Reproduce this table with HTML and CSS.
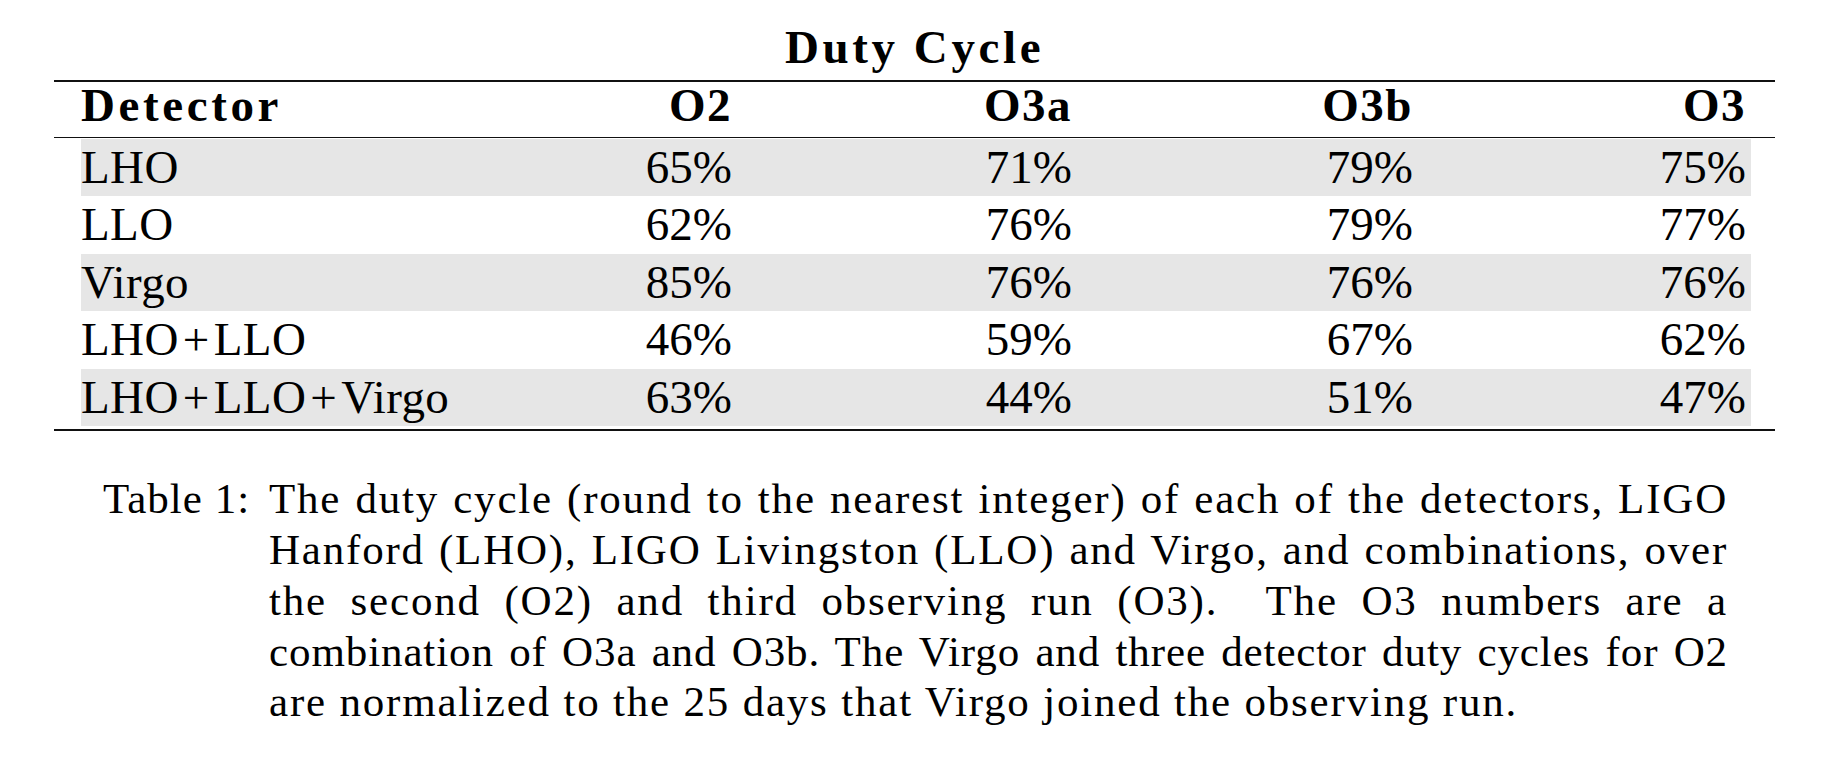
FILE: index.html
```html
<!DOCTYPE html>
<html>
<head>
<meta charset="utf-8">
<title>Duty Cycle</title>
<link rel="stylesheet" href="styles.css">
</head>
<body>
<div class="page">
  <div class="table-wrap">
    <div class="title">Duty Cycle</div>
    <div class="tbl">
      <div class="row head">
        <span class="name">Detector</span>
        <span class="num">O2</span>
        <span class="num">O3a</span>
        <span class="num">O3b</span>
        <span class="num">O3</span>
      </div>
      <div class="tbody">
        <div class="row shade">
          <span class="name">LHO</span>
          <span class="num">65%</span>
          <span class="num">71%</span>
          <span class="num">79%</span>
          <span class="num">75%</span>
        </div>
        <div class="row">
          <span class="name">LLO</span>
          <span class="num">62%</span>
          <span class="num">76%</span>
          <span class="num">79%</span>
          <span class="num">77%</span>
        </div>
        <div class="row shade">
          <span class="name">Virgo</span>
          <span class="num">85%</span>
          <span class="num">76%</span>
          <span class="num">76%</span>
          <span class="num">76%</span>
        </div>
        <div class="row">
          <span class="name">LHO<span class="plus">+</span>LLO</span>
          <span class="num">46%</span>
          <span class="num">59%</span>
          <span class="num">67%</span>
          <span class="num">62%</span>
        </div>
        <div class="row shade">
          <span class="name">LHO<span class="plus">+</span>LLO<span class="plus">+</span>Virgo</span>
          <span class="num">63%</span>
          <span class="num">44%</span>
          <span class="num">51%</span>
          <span class="num">47%</span>
        </div>
      </div>
    </div>
  </div>
  <div class="caption">
    <span class="label">Table 1:</span>
    <div class="ctext">
      <span class="line">The duty cycle (round to the nearest integer) of each of the detectors, LIGO</span>
      <span class="line">Hanford (LHO), LIGO Livingston (LLO) and Virgo, and combinations, over</span>
      <span class="line">the second (O2) and third observing run (O3). &nbsp;The O3 numbers are a</span>
      <span class="line tight">combination of O3a and O3b. The Virgo and three detector duty cycles for O2</span>
      <span class="line last">are normalized to the 25 days that Virgo joined the observing run.</span>
    </div>
  </div>
</div>
</body>
</html>
```

FILE: styles.css
```css
html, body {
  margin: 0;
  padding: 0;
  background: #ffffff;
}

body {
  font-family: "Liberation Serif", "Times New Roman", serif;
  color: #000000;
}

.page {
  padding-top: 23.6px;
}

.table-wrap {
  margin-left: 54px;
  width: 1721px;
}

.title {
  text-align: center;
  font-weight: bold;
  font-size: 47px;
  line-height: 47px;
  letter-spacing: 3.6px;
  margin-bottom: 9.4px;
}

.tbl {
  border-top: 2px solid #111111;
  border-bottom: 2px solid #111111;
}

.row {
  display: grid;
  grid-template-columns: 410px 241px 340px 341px 333px;
  margin: 0 24px 0 27px;
  padding-right: 5px;
  font-size: 47px;
}

.head {
  font-weight: bold;
  line-height: 47px;
  padding-bottom: 8px;
}

.head .name {
  letter-spacing: 3.6px;
}

.head .num {
  letter-spacing: 1.5px;
}

.tbody {
  border-top: 1px solid #111111;
  padding-top: 1px;
  padding-bottom: 3px;
}

.tbody .row {
  height: 57.5px;
  line-height: 57.5px;
}

.tbody .name {
  letter-spacing: 0.4px;
}

.plus {
  padding: 0 4px;
}

.shade {
  background: #e6e6e6;
}

.name {
  text-align: left;
  white-space: nowrap;
}

.num {
  text-align: right;
  white-space: nowrap;
}

.caption {
  display: flex;
  margin-top: 43px;
  margin-left: 103px;
  width: 1625px;
  font-size: 43px;
  line-height: 50.7px;
  letter-spacing: 1.8px;
}

.label {
  flex: none;
  width: 166px;
  white-space: nowrap;
  letter-spacing: 1px;
}

.ctext {
  flex: 1;
  min-width: 0;
}

.line {
  display: block;
  text-align: justify;
  text-align-last: justify;
}

.line.tight {
  letter-spacing: 0.9px;
  word-spacing: -2px;
}

.line.last {
  text-align-last: left;
}
```
